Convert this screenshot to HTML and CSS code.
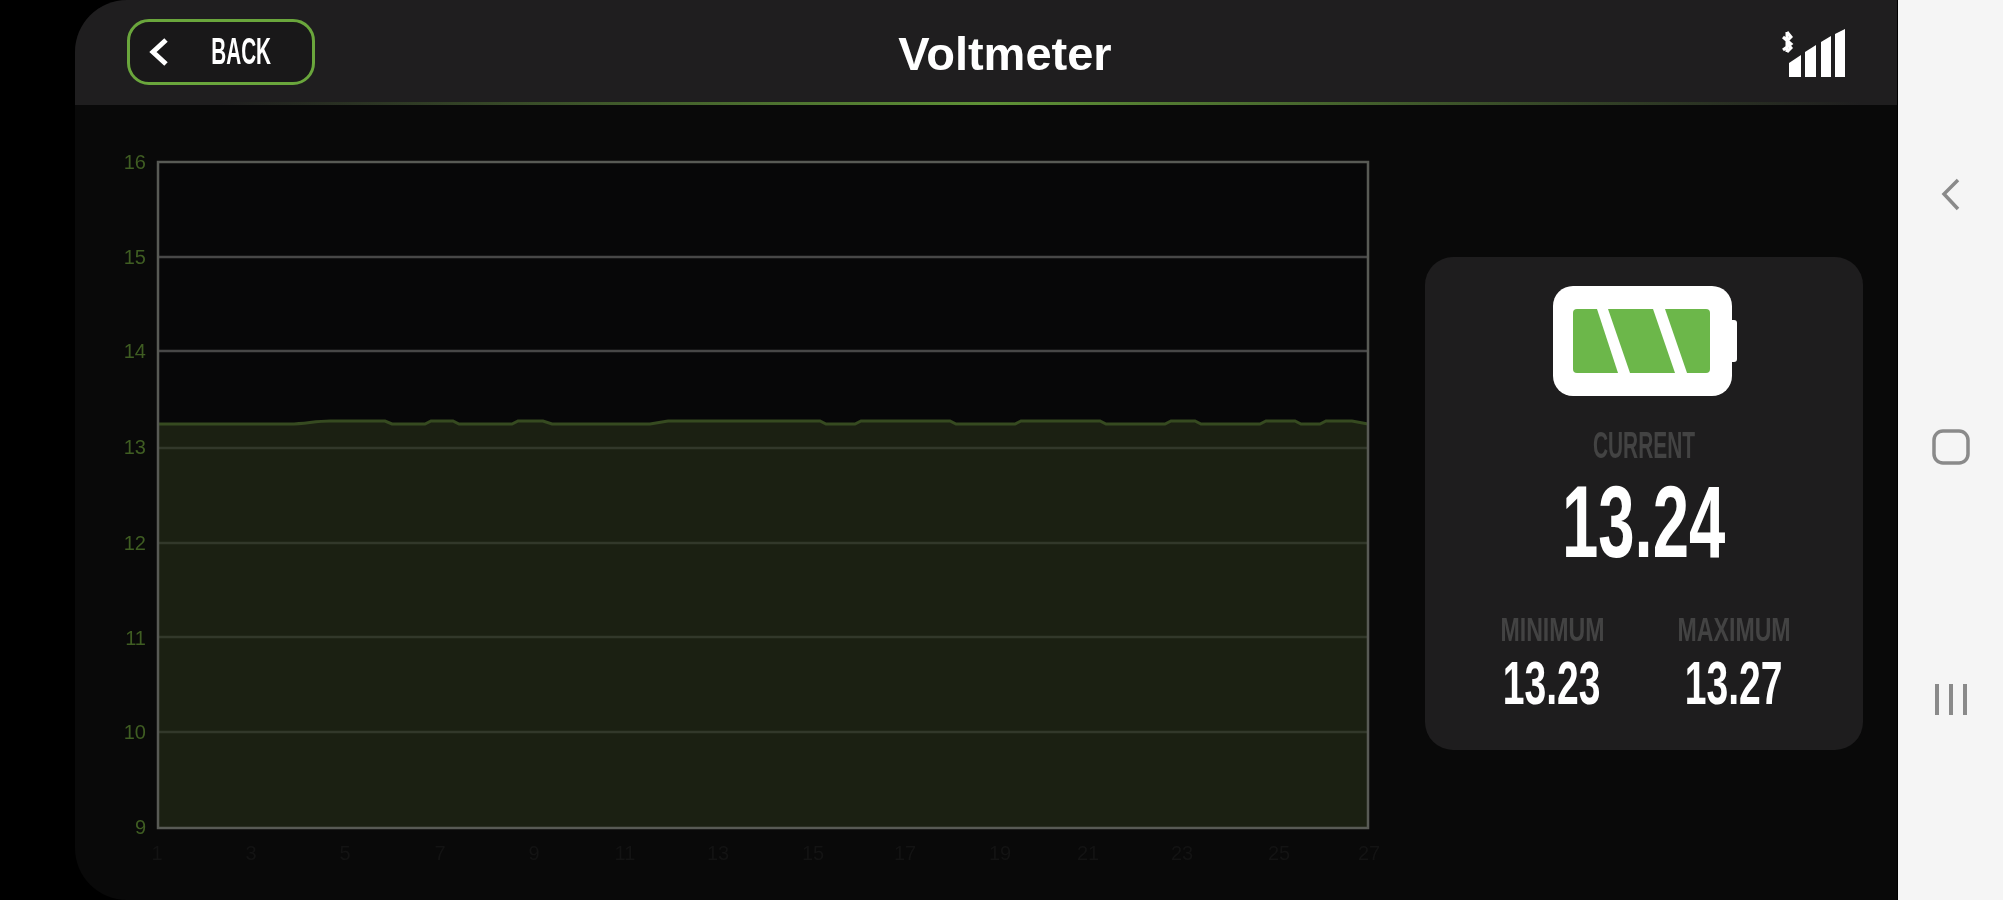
FILE: index.html
```html
<!DOCTYPE html>
<html lang="en">
<head>
<meta charset="utf-8">
<title>Voltmeter</title>
<link rel="stylesheet" href="styles.css">
</head>
<body>
<main class="app">
  <header class="topbar">
    <button class="back" type="button">
      <svg class="back-icon" viewBox="0 0 20 30"><path d="M17 3 L4 15 L17 27"/></svg>
      <span class="back-text">BACK</span>
    </button>
    <h1 class="title">Voltmeter</h1>
    <svg class="signal" viewBox="0 0 66 50">
      <path d="M8 3 V23 M4 8 L12 15 L4 21 M8 3 L12 8 L8 12 M8 14 L12 19 L8 23" class="signal-bt"/>
      <path d="M10 34 L22 26 V48 H10 Z"/>
      <path d="M26 23 L37 16 V48 H26 Z"/>
      <path d="M42 13 L52 7 V48 H42 Z"/>
      <path d="M56 5 L66 0 V48 H56 Z"/>
    </svg>
  </header>
  <div class="content">
    <svg class="chart" viewBox="110 130 1290 750">
      <rect class="plot" x="158" y="162" width="1210" height="666"/>
      <path class="area" d="M157 424 L290 424 C305 424 315 421 330 421 L385 421 L392 424 L425 424 L431 421 L453 421 L459 424 L512 424 L518 421 L543 421 L552 424 L650 424 L668 421 L820 421 L826 424 L855 424 L861 421 L950 421 L956 424 L1015 424 L1021 421 L1100 421 L1106 424 L1165 424 L1171 421 L1195 421 L1201 424 L1260 424 L1266 421 L1295 421 L1301 424 L1320 424 L1326 421 L1352 421 L1368 424 V828 H157 Z"/>
      <path class="grid-top" d="M157 257 H1368 M157 351 H1368"/>
      <path class="grid-low" d="M157 448 H1368 M157 543 H1368 M157 637 H1368 M157 732 H1368"/>
      <path class="line" d="M157 424 L290 424 C305 424 315 421 330 421 L385 421 L392 424 L425 424 L431 421 L453 421 L459 424 L512 424 L518 421 L543 421 L552 424 L650 424 L668 421 L820 421 L826 424 L855 424 L861 421 L950 421 L956 424 L1015 424 L1021 421 L1100 421 L1106 424 L1165 424 L1171 421 L1195 421 L1201 424 L1260 424 L1266 421 L1295 421 L1301 424 L1320 424 L1326 421 L1352 421 L1368 424"/>
      <rect class="frame" x="158" y="162" width="1210" height="666"/>
      <g class="y-labels">
        <text x="146" y="169">16</text><text x="146" y="264">15</text><text x="146" y="358">14</text><text x="146" y="454">13</text>
        <text x="146" y="550">12</text><text x="146" y="645">11</text><text x="146" y="739">10</text><text x="146" y="834">9</text>
      </g>
      <g class="x-labels">
        <text x="157" y="860">1</text><text x="251" y="860">3</text><text x="345" y="860">5</text><text x="440" y="860">7</text>
        <text x="534" y="860">9</text><text x="625" y="860">11</text><text x="718" y="860">13</text><text x="813" y="860">15</text>
        <text x="905" y="860">17</text><text x="1000" y="860">19</text><text x="1088" y="860">21</text><text x="1182" y="860">23</text>
        <text x="1279" y="860">25</text><text x="1369" y="860">27</text>
      </g>
    </svg>
    <section class="panel">
      <svg class="battery" viewBox="0 0 186 112">
        <rect class="battery-nub" x="172" y="35" width="12" height="42" rx="3"/>
        <rect class="battery-body" x="0" y="1" width="179" height="110" rx="20"/>
        <path class="battery-cell" d="M24 24 H44 L65 88 H24 Q20 88 20 84 V28 Q20 24 24 24 Z"/>
        <path class="battery-cell" d="M55 24 H100 L122 88 H77 Z"/>
        <path class="battery-cell" d="M112 24 H153 Q157 24 157 28 V84 Q157 88 153 88 H134 Z"/>
      </svg>
      <div class="label label-current">CURRENT</div>
      <div class="value-main">13.24</div>
      <div class="stats">
        <div class="stat">
          <div class="label label-stat">MINIMUM</div>
          <div class="value-stat">13.23</div>
        </div>
        <div class="stat">
          <div class="label label-stat">MAXIMUM</div>
          <div class="value-stat">13.27</div>
        </div>
      </div>
    </section>
  </div>
</main>
<nav class="softkeys">
  <svg class="key key-back" viewBox="0 0 20 33"><path d="M17 2 L3 16 L17 31"/></svg>
  <svg class="key key-home" viewBox="0 0 38 36"><rect x="2" y="2" width="34" height="32" rx="9"/></svg>
  <svg class="key key-recent" viewBox="0 0 34 33"><path d="M3 1 V32 M17 1 V32 M31 1 V32"/></svg>
</nav>
</body>
</html>
```
FILE: styles.css
```css
* { box-sizing: border-box; }
html, body { margin: 0; height: 100%; }
body {
  display: flex;
  height: 900px;
  overflow: hidden;
  padding-left: 75px;
  background: #000;
  font-family: "Liberation Sans", Arial, sans-serif;
  color: #fff;
}
.app {
  flex: 1;
  display: flex;
  flex-direction: column;
  margin-right: 1px;
  background: #090909;
  border-radius: 52px 0 0 52px;
  overflow: hidden;
}
.topbar {
  position: relative;
  height: 105px;
  flex: none;
  display: grid;
  grid-template-columns: 1fr auto 1fr;
  align-items: center;
  padding: 0 52px 2px 52px;
  background: #1f1e1f;
}
.topbar::after {
  content: "";
  position: absolute;
  left: 0;
  right: 0;
  bottom: 0;
  height: 3px;
  background: linear-gradient(90deg, #1f1e1f 8%, #5f9236 50%, #1f1e1f 98%);
}
.back {
  width: 188px;
  height: 66px;
  display: flex;
  align-items: center;
  padding: 0 0 0 19px;
  background: #191819;
  border: 3px solid #6aa63c;
  border-radius: 22px;
  color: #fff;
  font-family: inherit;
}
.back-icon { width: 20px; height: 30px; flex: none; }
.back-icon path { fill: none; stroke: #fff; stroke-width: 5; }
.back-text {
  display: inline-block;
  width: 60px;
  margin-left: 29px;
  font-size: 37px;
  font-weight: 700;
  line-height: 1;
  text-align: center;
  white-space: nowrap;
  transform: scaleX(.56);
  filter: blur(.7px);
}
.title {
  margin: 4px 0 0 38px;
  font-size: 47px;
  font-weight: 700;
  line-height: 1;
  filter: blur(.7px);
}
.signal {
  justify-self: end;
  width: 66px;
  height: 50px;
  fill: #fff;
  margin: 4px 0 0 0;
  filter: blur(.7px);
}
.signal-bt { fill: none; stroke: #fff; stroke-width: 3; }
.content {
  flex: 1;
  display: flex;
  align-items: flex-start;
  padding: 25px 0 0 35px;
}
.chart { width: 1290px; height: 750px; flex: none; filter: blur(.6px); }
.plot { fill: #070708; }
.area { fill: #1b2012; }
.grid-top { fill: none; stroke: #474747; stroke-width: 2.5; }
.grid-low { fill: none; stroke: #32382a; stroke-width: 2.5; }
.line { fill: none; stroke: #364a20; stroke-width: 3; }
.frame { fill: none; stroke: #585a55; stroke-width: 2.5; }
.y-labels { fill: #3f5d22; font-size: 20px; text-anchor: end; }
.x-labels { fill: #131313; font-size: 20px; text-anchor: middle; }
.panel {
  flex: none;
  width: 438px;
  height: 493px;
  margin: 127px 0 0 25px;
  padding-top: 28px;
  display: flex;
  flex-direction: column;
  align-items: center;
  background: #1e1d1e;
  border-radius: 28px;
}
.battery { width: 186px; height: 112px; flex: none; margin-left: 3px; filter: blur(.5px); }
.battery-body, .battery-nub { fill: #fff; }
.battery-cell { fill: #6cb74a; }
.label {
  color: #434343;
  font-weight: 700;
  line-height: 1;
  white-space: nowrap;
  text-align: center;
  filter: blur(.7px);
}
.label-current {
  margin-top: 31px;
  font-size: 36px;
  transform: scaleX(.58);
}
.value-main {
  margin-top: 17px;
  font-size: 102px;
  font-weight: 700;
  line-height: 82px;
  transform: scaleX(.64);
  filter: blur(.6px);
}
.stats {
  display: flex;
  justify-content: center;
  gap: 60px;
  margin-top: 49px;
  width: 100%;
  padding-right: 2px;
}
.stat {
  width: 122px;
  display: flex;
  flex-direction: column;
  align-items: center;
}
.label-stat {
  font-size: 34px;
  transform: scaleX(.68);
}
.value-stat {
  margin-top: 10px;
  font-size: 62px;
  font-weight: 700;
  line-height: 54px;
  white-space: nowrap;
  transform: scaleX(.63);
  filter: blur(.6px);
}
.softkeys {
  flex: none;
  width: 105px;
  display: flex;
  flex-direction: column;
  align-items: center;
  padding-top: 178px;
  gap: 218px;
  background: #f5f5f5;
}
.key { flex: none; filter: blur(.6px); }
.key path, .key rect { fill: none; stroke: #8a8a8a; }
.key-back { width: 20px; height: 33px; stroke-width: 3.5; }
.key-home { width: 38px; height: 36px; stroke-width: 3.5; }
.key-recent { width: 34px; height: 33px; stroke-width: 4; }
```
